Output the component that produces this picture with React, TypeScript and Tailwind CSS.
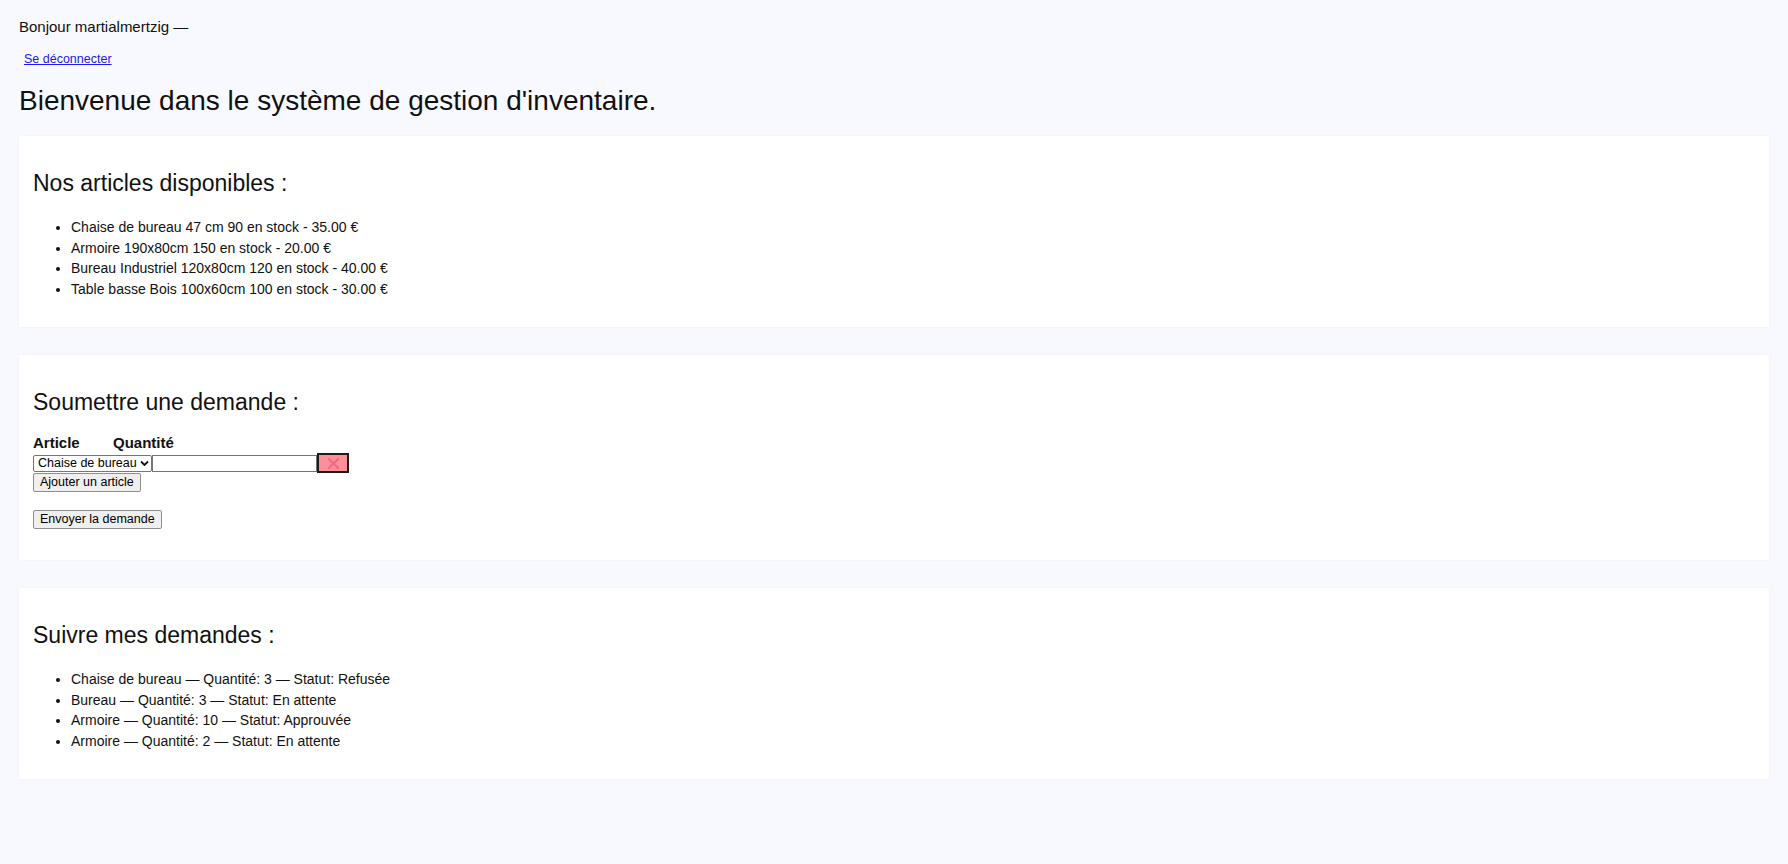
import { useState } from "react";

const articles = [
  "Chaise de bureau 47 cm 90 en stock - 35.00 €",
  "Armoire 190x80cm 150 en stock - 20.00 €",
  "Bureau Industriel 120x80cm 120 en stock - 40.00 €",
  "Table basse Bois 100x60cm 100 en stock - 30.00 €",
];

const demandes = [
  "Chaise de bureau — Quantité: 3 — Statut: Refusée",
  "Bureau — Quantité: 3 — Statut: En attente",
  "Armoire — Quantité: 10 — Statut: Approuvée",
  "Armoire — Quantité: 2 — Statut: En attente",
];

function Card({ title, children }: { title: string; children: React.ReactNode }) {
  return (
    <section className="bg-white px-[14px] pt-[34px] shadow-[0_0_2px_rgba(0,0,0,0.04)]">
      <h2 className="text-[23px] leading-[27px] text-[#111]">{title}</h2>
      {children}
    </section>
  );
}

function ItemList({ items }: { items: string[] }) {
  return (
    <ul className="mt-[20px] list-disc pb-[28px] pl-[38px] text-[14px] leading-[20.5px] text-[#111]">
      {items.map((item) => (
        <li key={item}>{item}</li>
      ))}
    </ul>
  );
}

export default function App() {
  const [qty, setQty] = useState("");

  return (
    <div className="min-h-screen bg-[#f8f9fe] px-[19px] pt-[18px] pb-[80px] font-['Liberation_Sans',Arial,sans-serif] text-[#111]">
      <p className="text-[15px] leading-[17px]">Bonjour martialmertzig —</p>
      <a
        href="#"
        className="mt-[17px] ml-[5px] block w-fit text-[12.5px] leading-[15px] text-[#1a1ae6] underline"
      >
        Se déconnecter
      </a>
      <h1 className="mt-[18px] text-[28px] leading-[32px]">
        Bienvenue dans le système de gestion d'inventaire.
      </h1>

      <div className="mt-[19px] flex flex-col gap-[28px]">
        <Card title="Nos articles disponibles :">
          <ItemList items={articles} />
        </Card>

        <Card title="Soumettre une demande :">
          <form className="pb-[31px]" onSubmit={(e) => e.preventDefault()}>
            <div className="mt-[18px] flex text-[15px] leading-[17px] font-bold">
              <span className="w-[80px]">Article</span>
              <span>Quantité</span>
            </div>
            <div className="mt-[2px] flex h-[20px] items-center">
              <div className="relative flex">
                <select className="h-[17px] w-[119px] appearance-none rounded-[2px] border border-[#767676] bg-white pl-[4px] text-[12.5px] leading-[15px] text-black">
                  <option>Chaise de bureau</option>
                  <option>Armoire</option>
                  <option>Bureau Industriel</option>
                  <option>Table basse Bois</option>
                </select>
                <svg
                  className="pointer-events-none absolute top-[5px] right-[3px]"
                  width="9"
                  height="7"
                  viewBox="0 0 9 7"
                >
                  <path d="M1 1.5 L4.5 5 L8 1.5" fill="none" stroke="#111" strokeWidth="1.8" />
                </svg>
              </div>
              <input
                value={qty}
                onChange={(e) => setQty(e.target.value)}
                className="h-[17px] w-[165px] border border-[#767676] bg-white px-[2px] text-[12.5px] outline-none"
              />
              <button
                type="button"
                className="flex h-[20px] w-[32px] items-center justify-center border-2 border-[#1c1c1c] bg-[#ff8f96]"
              >
                <svg width="13" height="13" viewBox="0 0 13 13">
                  <path
                    d="M2 2 L11 11 M11 2 L2 11"
                    stroke="#ef6a88"
                    strokeWidth="2.4"
                    strokeLinecap="round"
                  />
                </svg>
              </button>
            </div>
            <button
              type="button"
              className="block h-[19px] rounded-[2px] border border-[#8f8f8f] bg-[#efefef] px-[6px] text-[12.5px] leading-[15px] text-black"
            >
              Ajouter un article
            </button>
            <button
              type="submit"
              className="mt-[18px] block h-[19px] rounded-[2px] border border-[#8f8f8f] bg-[#efefef] px-[6px] text-[12.5px] leading-[15px] text-black"
            >
              Envoyer la demande
            </button>
          </form>
        </Card>

        <Card title="Suivre mes demandes :">
          <ItemList items={demandes} />
        </Card>
      </div>
    </div>
  );
}
